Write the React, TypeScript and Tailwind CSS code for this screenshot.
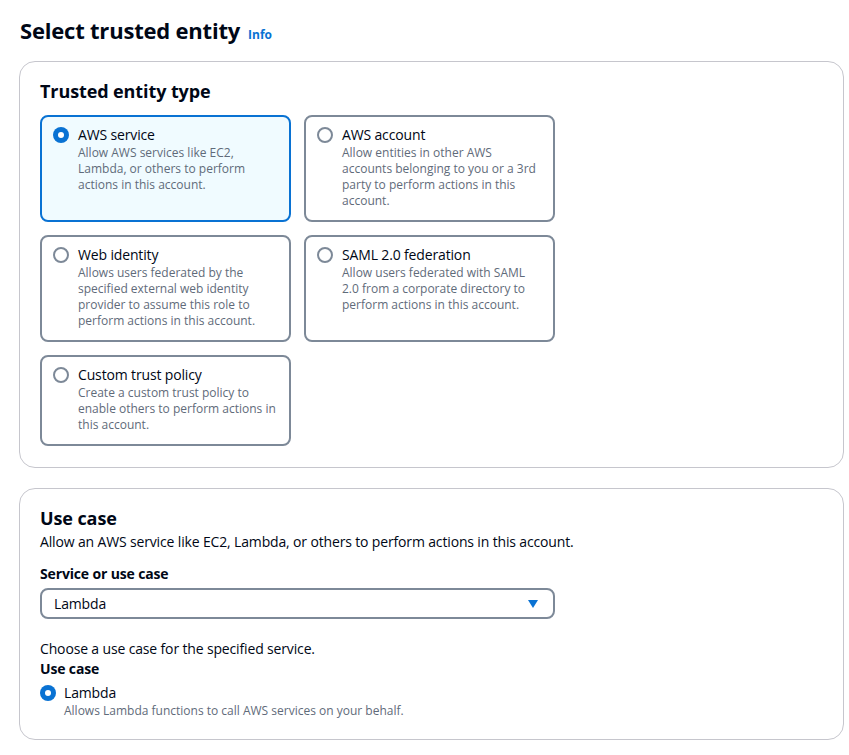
import { ReactNode } from "react";

type Tile = {
  title: string;
  desc: string;
  selected?: boolean;
};

const tiles: Tile[] = [
  {
    title: "AWS service",
    desc: "Allow AWS services like EC2, Lambda, or others to perform actions in this account.",
    selected: true,
  },
  {
    title: "AWS account",
    desc: "Allow entities in other AWS accounts belonging to you or a 3rd party to perform actions in this account.",
  },
  {
    title: "Web identity",
    desc: "Allows users federated by the specified external web identity provider to assume this role to perform actions in this account.",
  },
  {
    title: "SAML 2.0 federation",
    desc: "Allow users federated with SAML 2.0 from a corporate directory to perform actions in this account.",
  },
  {
    title: "Custom trust policy",
    desc: "Create a custom trust policy to enable others to perform actions in this account.",
  },
];

function Radio({ checked }: { checked?: boolean }) {
  if (checked) {
    return (
      <span className="mt-[2px] w-4 h-4 shrink-0 rounded-full bg-[#0972d3] flex items-center justify-center">
        <span className="w-[6px] h-[6px] rounded-full bg-white" />
      </span>
    );
  }
  return <span className="mt-[2px] w-4 h-4 shrink-0 rounded-full border-2 border-[#7d8998] bg-white" />;
}

function Panel({ children, bottom = "pb-5" }: { children: ReactNode; bottom?: string }) {
  return (
    <div className={"border border-[#c6c6cd] rounded-[16px] bg-white px-5 pt-4 " + bottom}>{children}</div>
  );
}

export default function App() {
  return (
    <div
      className="min-h-screen bg-white text-[#000716] pl-[19px] pr-[5px] pt-[15px]"
      style={{ fontFamily: '"Open Sans", "Noto Sans", sans-serif' }}
    >
      <div className="flex items-baseline gap-2 pl-px mb-[16px]">
        <h1 className="text-[22px] leading-[30px] font-bold tracking-[-0.2px]">Select trusted entity</h1>
        <a className="text-[12px] font-bold text-[#0972d3]">Info</a>
      </div>

      <Panel bottom="pb-[21px]">
        <h2 className="text-[18px] leading-[26px] font-bold mb-[11px] tracking-[-0.1px]">Trusted entity type</h2>
        <div className="grid grid-cols-[251px_251px] gap-x-[13px] gap-y-[13px]">
          {tiles.map((t) => (
            <div
              key={t.title}
              className={
                t.selected
                  ? "border-2 border-[#0972d3] bg-[#f0fbff] rounded-[8px] px-[11px] pt-[8px] pb-[11px] flex gap-2"
                  : "border-2 border-[#7d8998] bg-white rounded-[8px] px-[11px] pt-[8px] pb-[11px] flex gap-2"
              }
            >
              <Radio checked={t.selected} />
              <div className="pl-[1px]">
                <div className="text-[14px] leading-[20px] tracking-[-0.15px]">{t.title}</div>
                <div className="text-[12px] leading-[16px] text-[#5f6b7a]">{t.desc}</div>
              </div>
            </div>
          ))}
        </div>
      </Panel>

      <div className="mt-[20px]">
        <Panel>
          <h2 className="text-[18px] leading-[26px] font-bold tracking-[-0.1px]">Use case</h2>
          <p className="text-[14px] leading-[20px] mt-[1px] tracking-[-0.15px]">
            Allow an AWS service like EC2, Lambda, or others to perform actions in this account.
          </p>
          <div className="text-[14px] leading-[20px] font-bold mt-[12px] tracking-[-0.15px]">Service or use case</div>
          <div className="mt-[4px] w-[515px] h-[31px] border-2 border-[#7d8998] rounded-[8px] flex items-center justify-between pl-[12px] pr-[14px]">
            <span className="text-[14px] tracking-[-0.15px]">Lambda</span>
            <svg width="12" height="10" viewBox="0 0 12 10">
              <polygon points="1,1 11,1 6,9" fill="#0972d3" />
            </svg>
          </div>
          <p className="text-[14px] leading-[20px] mt-[20px] tracking-[-0.15px]">Choose a use case for the specified service.</p>
          <div className="text-[14px] leading-[20px] font-bold tracking-[-0.15px]">Use case</div>
          <div className="flex gap-2 mt-[4px]">
            <Radio checked />
            <div>
              <div className="text-[14px] leading-[20px] tracking-[-0.15px]">Lambda</div>
              <div className="text-[12px] leading-[16px] text-[#5f6b7a]">
                Allows Lambda functions to call AWS services on your behalf.
              </div>
            </div>
          </div>
        </Panel>
      </div>
    </div>
  );
}
